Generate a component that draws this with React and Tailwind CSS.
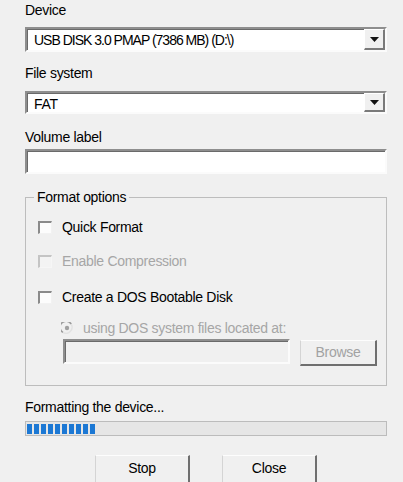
import React from 'react';

const font = { fontFamily: '"Liberation Sans", Arial, sans-serif' };

function Sunken({ className = '', disabled, children }) {
  return (
    <div
      className={`border-2 border-t-[#8e8e8e] border-l-[#8e8e8e] border-b-[#fbfbfb] border-r-[#fbfbfb] shadow-[inset_1px_1px_0_#6a6a6a] ${
        disabled ? 'bg-[#f0f0f0]' : 'bg-white'
      } ${className}`}
    >
      {children}
    </div>
  );
}

function Combo({ value, className = '', textClass = '' }) {
  return (
    <Sunken className={`flex items-stretch ${className}`}>
      <div className={`flex-1 pl-[7px] pt-[2px] text-[14px] leading-[18px] text-black ${textClass}`}>{value}</div>
      <div className="w-[21px] flex items-center justify-center bg-[#f0f0f0] border-t border-l border-t-white border-l-white border-b-2 border-r-2 border-b-[#7a7a7a] border-r-[#7a7a7a]">
        <svg width="9" height="5" viewBox="0 0 9 5">
          <path d="M0 0h9L4.5 5z" fill="#111" />
        </svg>
      </div>
    </Sunken>
  );
}

function Check({ label, disabled }) {
  return (
    <div className="flex items-center h-[16px] gap-[10px]">
      <div
        className={`w-[14px] h-[13px] border-t-2 border-l-2 border-b border-r ${
          disabled
            ? 'border-t-[#c4c4c4] border-l-[#c4c4c4] border-b-[#f6f6f6] border-r-[#f6f6f6] bg-[#f3f3f3]'
            : 'border-t-[#8a8a8a] border-l-[#8a8a8a] border-b-[#f2f2f2] border-r-[#f2f2f2] bg-[#fcfcfc]'
        }`}
      />
      <span className={`text-[14px] leading-[16px] ${disabled ? 'text-[#a6a6a6]' : 'text-black'}`}>
        {label}
      </span>
    </div>
  );
}

function Button({ label, disabled, className = '' }) {
  return (
    <div
      className={`flex items-center justify-center bg-[#f0f0f0] border-t border-l border-t-[#fdfdfd] border-l-[#d4d4d4] border-b-2 border-r-2 border-b-[#6f6f6f] border-r-[#6f6f6f] text-[14px] ${
        disabled ? 'text-[#a2a2a2]' : 'text-black'
      } ${className}`}
    >
      {label}
    </div>
  );
}

export default function App() {
  return (
    <div className="w-[403px] h-[482px] overflow-hidden bg-[#f0f0f0] text-black tracking-[-0.3px]" style={font}>
      <div className="pl-[25px] w-[387px] pt-[2px] flex flex-col">
        <div className="text-[14px] leading-[16px] h-[16px]">Device</div>
        <Combo
          value="USB DISK 3.0 PMAP (7386 MB) (D:\)"
          textClass="tracking-[-1px]"
          className="mt-[9px] h-[25px]"
        />

        <div className="mt-[13px] text-[14px] leading-[16px] h-[16px]">File system</div>
        <Combo value="FAT" className="mt-[10px] h-[23px]" />

        <div className="mt-[15px] text-[14px] leading-[16px] h-[16px]">Volume label</div>
        <Sunken className="mt-[4px] h-[25px]" />

        <div className="relative mt-[23px] border border-[#bdbdbd] h-[189px] pl-[12px] pt-[21px] flex flex-col">
          <span className="absolute -top-[9px] left-[8px] px-[3px] bg-[#f0f0f0] text-[14px] leading-[16px]">
            Format options
          </span>
          <Check label="Quick Format" />
          <div className="mt-[18px]">
            <Check label="Enable Compression" disabled />
          </div>
          <div className="mt-[20px]">
            <Check label="Create a DOS Bootable Disk" />
          </div>
          <div className="mt-[15px] pl-[23px] flex items-center h-[16px] gap-[10px]">
            <svg width="12" height="12" viewBox="0 0 12 12">
              <path d="M10.2 2.2A6 6 0 1 0 2 10.4" fill="none" stroke="#9a9a9a" strokeWidth="1.6" />
              <path d="M2 10.4A6 6 0 0 0 10.2 2.2" fill="none" stroke="#e2e2e2" strokeWidth="1.4" />
              <circle cx="6" cy="6" r="2.2" fill="#a0a0a0" />
            </svg>
            <span className="text-[14px] leading-[16px] text-[#a6a6a6]">using DOS system files located at:</span>
          </div>
          <div className="mt-[3px] pl-[25px] flex items-start">
            <Sunken disabled className="w-[227px] h-[25px]" />
            <Button label="Browse" disabled className="ml-[10px] mt-[1px] w-[77px] h-[26px]" />
          </div>
        </div>

        <div className="mt-[13px] text-[14px] leading-[16px] h-[16px]">Formatting the device...</div>
        <div className="mt-[6px] h-[15px] border border-[#bcbcbc] bg-[#e6e6e6] flex items-center pl-[1px] gap-[2px]">
          {Array.from({ length: 10 }).map((_, i) => (
            <div key={i} className="w-[5px] h-[10px] bg-[#1c78d4]" />
          ))}
        </div>

        <div className="mt-[19px] flex pl-[70px] gap-[32px]">
          <Button label="Stop" className="w-[95px] h-[30px] pb-[3px]" />
          <Button label="Close" className="w-[95px] h-[30px] pb-[3px]" />
        </div>
      </div>
    </div>
  );
}
